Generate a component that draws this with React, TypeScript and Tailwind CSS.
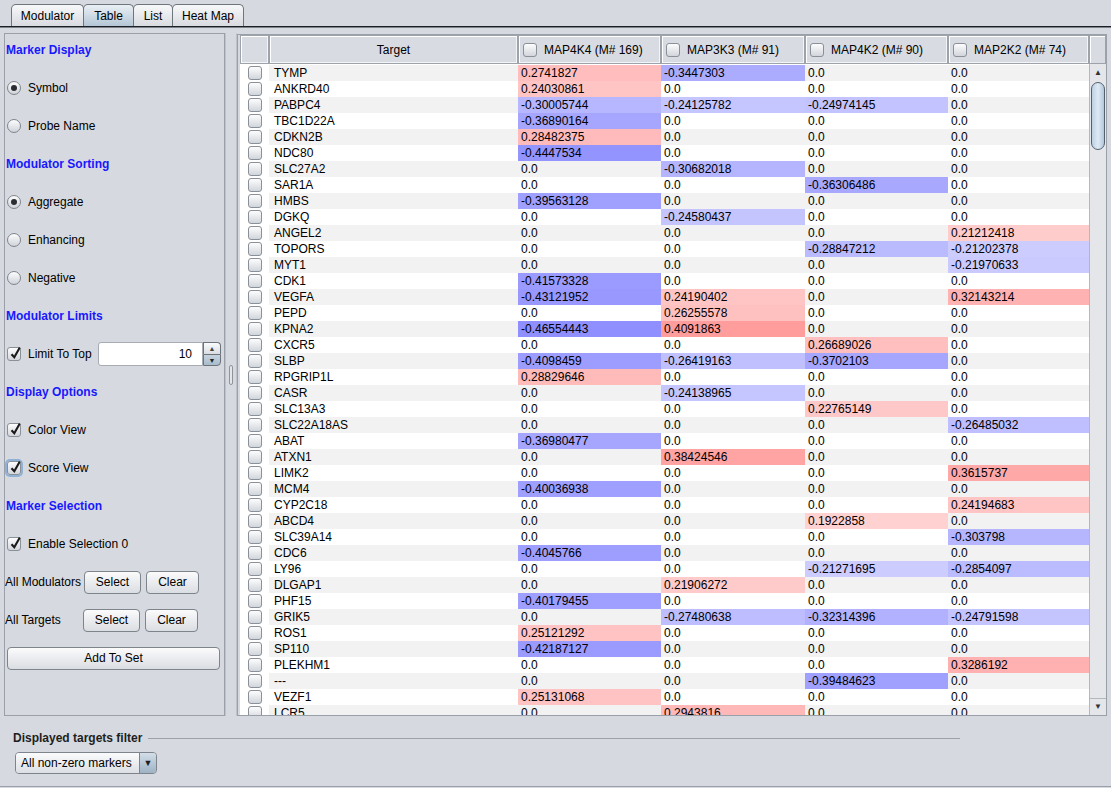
import React from "react";

type Row = [string, string, string, string, string];

const rows: Row[] = [
  ["TYMP", "0.2741827", "-0.3447303", "0.0", "0.0"],
  ["ANKRD40", "0.24030861", "0.0", "0.0", "0.0"],
  ["PABPC4", "-0.30005744", "-0.24125782", "-0.24974145", "0.0"],
  ["TBC1D22A", "-0.36890164", "0.0", "0.0", "0.0"],
  ["CDKN2B", "0.28482375", "0.0", "0.0", "0.0"],
  ["NDC80", "-0.4447534", "0.0", "0.0", "0.0"],
  ["SLC27A2", "0.0", "-0.30682018", "0.0", "0.0"],
  ["SAR1A", "0.0", "0.0", "-0.36306486", "0.0"],
  ["HMBS", "-0.39563128", "0.0", "0.0", "0.0"],
  ["DGKQ", "0.0", "-0.24580437", "0.0", "0.0"],
  ["ANGEL2", "0.0", "0.0", "0.0", "0.21212418"],
  ["TOPORS", "0.0", "0.0", "-0.28847212", "-0.21202378"],
  ["MYT1", "0.0", "0.0", "0.0", "-0.21970633"],
  ["CDK1", "-0.41573328", "0.0", "0.0", "0.0"],
  ["VEGFA", "-0.43121952", "0.24190402", "0.0", "0.32143214"],
  ["PEPD", "0.0", "0.26255578", "0.0", "0.0"],
  ["KPNA2", "-0.46554443", "0.4091863", "0.0", "0.0"],
  ["CXCR5", "0.0", "0.0", "0.26689026", "0.0"],
  ["SLBP", "-0.4098459", "-0.26419163", "-0.3702103", "0.0"],
  ["RPGRIP1L", "0.28829646", "0.0", "0.0", "0.0"],
  ["CASR", "0.0", "-0.24138965", "0.0", "0.0"],
  ["SLC13A3", "0.0", "0.0", "0.22765149", "0.0"],
  ["SLC22A18AS", "0.0", "0.0", "0.0", "-0.26485032"],
  ["ABAT", "-0.36980477", "0.0", "0.0", "0.0"],
  ["ATXN1", "0.0", "0.38424546", "0.0", "0.0"],
  ["LIMK2", "0.0", "0.0", "0.0", "0.3615737"],
  ["MCM4", "-0.40036938", "0.0", "0.0", "0.0"],
  ["CYP2C18", "0.0", "0.0", "0.0", "0.24194683"],
  ["ABCD4", "0.0", "0.0", "0.1922858", "0.0"],
  ["SLC39A14", "0.0", "0.0", "0.0", "-0.303798"],
  ["CDC6", "-0.4045766", "0.0", "0.0", "0.0"],
  ["LY96", "0.0", "0.0", "-0.21271695", "-0.2854097"],
  ["DLGAP1", "0.0", "0.21906272", "0.0", "0.0"],
  ["PHF15", "-0.40179455", "0.0", "0.0", "0.0"],
  ["GRIK5", "0.0", "-0.27480638", "-0.32314396", "-0.24791598"],
  ["ROS1", "0.25121292", "0.0", "0.0", "0.0"],
  ["SP110", "-0.42187127", "0.0", "0.0", "0.0"],
  ["PLEKHM1", "0.0", "0.0", "0.0", "0.3286192"],
  ["---", "0.0", "0.0", "-0.39484623", "0.0"],
  ["VEZF1", "0.25131068", "0.0", "0.0", "0.0"],
  ["LCR5", "0.0", "0.2943816", "0.0", "0.0"],
];

const valueWidths = ["w-[143px]", "w-[144px]", "w-[143px]", "w-[141px]"];

function cellBg(s: string): string | undefined {
  const v = parseFloat(s);
  if (!v) return undefined;
  const d = Math.round(255 - 240 * Math.abs(v));
  return v > 0 ? `rgb(255,${d},${d})` : `rgb(${d},${d},255)`;
}

function Box({ checked = false, focus = false }: { checked?: boolean; focus?: boolean }) {
  return (
    <span
      className={`relative inline-block w-[14px] h-[14px] shrink-0 rounded-[3px] border border-[#8a9098] bg-linear-to-b from-[#fdfdfe] to-[#d2d5db] ${
        focus ? "ring-2 ring-[#8fb1d6]" : ""
      }`}
    >
      {checked && (
        <svg className="absolute left-[1px] top-[-2px]" width="13" height="14" viewBox="0 0 13 14">
          <path d="M2.5 8.2 L5.3 11.3 L10.8 1.5" fill="none" stroke="#1a1a1a" strokeWidth="2.1" />
        </svg>
      )}
    </span>
  );
}

function Radio({ checked = false }: { checked?: boolean }) {
  return (
    <span className="inline-flex items-center justify-center w-[14px] h-[14px] shrink-0 rounded-full border border-[#7f858d] bg-linear-to-b from-[#fdfdfe] to-[#cfd3d9]">
      {checked && <span className="w-[6px] h-[6px] rounded-full bg-[#2a2d31]" />}
    </span>
  );
}

function Btn({ label, w }: { label: string; w: string }) {
  return (
    <div
      className={`${w} h-[23px] shrink-0 flex items-center justify-center rounded-[4px] border border-[#7e848c] bg-linear-to-b from-[#fbfbfc] to-[#dadde2] text-black`}
    >
      {label}
    </div>
  );
}

function Heading({ children }: { children: React.ReactNode }) {
  return <div className="h-[24px] flex items-center pl-[1px] font-bold text-[#1818ff]">{children}</div>;
}

function Item({ children }: { children: React.ReactNode }) {
  return <div className="h-[24px] flex items-center pl-[2px] gap-[7px]">{children}</div>;
}

function Tab({ label, w, selected = false }: { label: string; w: string; selected?: boolean }) {
  return (
    <div
      className={`${w} h-[22px] -mr-[1px] flex items-center justify-center rounded-t-[5px] border border-b-0 border-[#6f757d] ${
        selected
          ? "bg-linear-to-b from-[#eaf0f5] to-[#b4c6d5]"
          : "bg-linear-to-b from-[#f7f8f9] to-[#d8dbe0]"
      }`}
    >
      {label}
    </div>
  );
}

function HeaderCell({ w, children, center = false }: { w: string; children?: React.ReactNode; center?: boolean }) {
  return (
    <div
      className={`${w} h-full shrink-0 flex items-center border border-[#9ea3ab] bg-[#d8dbe1] shadow-[inset_1px_1px_0_#ffffff,inset_-1px_-1px_0_#f4f5f7] ${
        center ? "justify-center" : "pl-[4px] gap-[7px]"
      }`}
    >
      {children}
    </div>
  );
}

export default function App() {
  return (
    <div className="w-[1111px] h-[788px] overflow-hidden bg-[#d6d9df] flex flex-col text-[12px] text-black font-['Liberation_Sans',Arial,sans-serif] leading-none">
      {/* Tabs */}
      <div className="pt-[4px] pl-[11px] flex">
        <Tab label="Modulator" w="w-[73px]" />
        <Tab label="Table" w="w-[51px]" selected />
        <Tab label="List" w="w-[40px]" />
        <Tab label="Heat Map" w="w-[72px]" />
      </div>
      <div className="h-[1px] bg-[#1c2026]" />
      <div className="h-[1px] bg-[#7d838b]" />

      {/* Main */}
      <div className="mt-[5px] h-[683px] flex">
        {/* Left panel */}
        <div className="ml-[4px] w-[221px] h-full border border-[#9ba0a8] flex flex-col pt-[4px] gap-[14px]">
          <Heading>Marker Display</Heading>
          <Item>
            <Radio checked />
            <span>Symbol</span>
          </Item>
          <Item>
            <Radio />
            <span>Probe Name</span>
          </Item>
          <Heading>Modulator Sorting</Heading>
          <Item>
            <Radio checked />
            <span>Aggregate</span>
          </Item>
          <Item>
            <Radio />
            <span>Enhancing</span>
          </Item>
          <Item>
            <Radio />
            <span>Negative</span>
          </Item>
          <Heading>Modulator Limits</Heading>
          <div className="h-[24px] flex items-center pl-[2px]">
            <Box checked />
            <span className="ml-[7px] w-[70px]">Limit To Top</span>
            <div className="w-[105px] h-[24px] bg-white border border-[#a7acb4] rounded-l-[3px] flex items-center justify-end pr-[10px]">
              10
            </div>
            <div className="w-[18px] h-[24px] flex flex-col">
              <div className="h-[12px] flex items-center justify-center border border-b-0 border-[#6d737b] rounded-tr-[4px] bg-linear-to-b from-[#fafbfc] to-[#d9dde2] text-[7px] text-[#444]">
                ▲
              </div>
              <div className="h-[12px] flex items-center justify-center border border-[#6d737b] rounded-br-[4px] bg-linear-to-b from-[#c7d4df] to-[#a8bccc] text-[7px] text-[#222]">
                ▼
              </div>
            </div>
          </div>
          <Heading>Display Options</Heading>
          <Item>
            <Box checked />
            <span>Color View</span>
          </Item>
          <Item>
            <Box checked focus />
            <span>Score View</span>
          </Item>
          <Heading>Marker Selection</Heading>
          <Item>
            <Box checked />
            <span>Enable Selection 0</span>
          </Item>
          <div className="h-[24px] flex items-center">
            <span className="w-[79px]">All Modulators</span>
            <Btn label="Select" w="w-[57px]" />
            <span className="w-[5px]" />
            <Btn label="Clear" w="w-[53px]" />
          </div>
          <div className="h-[24px] flex items-center">
            <span className="w-[78px]">All Targets</span>
            <Btn label="Select" w="w-[57px]" />
            <span className="w-[5px]" />
            <Btn label="Clear" w="w-[53px]" />
          </div>
          <div className="h-[24px] flex items-center pl-[2px]">
            <Btn label="Add To Set" w="w-[213px]" />
          </div>
        </div>

        {/* Splitter */}
        <div className="w-[12px] h-full flex items-center justify-center border-l border-r border-[#bfc3c9]">
          <div className="w-[4px] h-[20px] rounded-full border border-[#8e949c] bg-[#e4e6ea]" />
        </div>

        {/* Table scroll pane */}
        <div className="mt-[1px] w-[870px] h-[682px] border border-[#9aa0a8] bg-white flex overflow-hidden">
          <div className="w-[851px] pl-[2px] flex flex-col bg-[#d6d9df]">
            <div className="h-[29px] flex shrink-0">
              <HeaderCell w="w-[29px]" />
              <HeaderCell w="w-[249px]" center>
                Target
              </HeaderCell>
              <HeaderCell w="w-[143px]">
                <Box />
                <span>MAP4K4 (M# 169)</span>
              </HeaderCell>
              <HeaderCell w="w-[144px]">
                <Box />
                <span>MAP3K3 (M# 91)</span>
              </HeaderCell>
              <HeaderCell w="w-[143px]">
                <Box />
                <span>MAP4K2 (M# 90)</span>
              </HeaderCell>
              <HeaderCell w="w-[141px]">
                <Box />
                <span>MAP2K2 (M# 74)</span>
              </HeaderCell>
            </div>
            <div className="flex-1 overflow-hidden bg-white pt-[1px]">
              {rows.map((r, i) => {
                const stripe = i % 2 === 0 ? "bg-[#f2f2f2]" : "bg-white";
                return (
                  <div key={i} className="h-[16px] flex leading-[15px]">
                    <div className="w-[29px] shrink-0 bg-white flex items-center justify-center">
                      <Box />
                    </div>
                    <div className={`w-[249px] shrink-0 pl-[5px] pt-[1px] ${stripe}`}>{r[0]}</div>
                    {r.slice(1).map((v, j) => (
                      <div
                        key={j}
                        className={`${valueWidths[j]} shrink-0 pl-[3px] pt-[1px] ${stripe}`}
                        style={cellBg(v) ? { backgroundColor: cellBg(v) } : undefined}
                      >
                        {v}
                      </div>
                    ))}
                  </div>
                );
              })}
            </div>
          </div>

          {/* Scrollbar */}
          <div className="w-[17px] flex flex-col">
            <div className="h-[29px] shrink-0 border border-[#9ea3ab] bg-[#d8dbe1] shadow-[inset_1px_1px_0_#ffffff]" />
            <div className="flex-1 flex flex-col bg-[#e4e6e9] border-l border-[#b3b8bf]">
              <div className="h-[17px] pt-[1px] flex items-center justify-center text-[8px] text-[#2f3338]">▲</div>
              <div className="mx-[1px] mt-[1px] h-[68px] rounded-[7px] border border-[#53606d] bg-linear-to-r from-[#bcd1e3] via-[#dfeaf4] to-[#b2c8dc]" />
              <div className="flex-1" />
              <div className="h-[16px] mb-[1px] flex items-center justify-center text-[8px] text-[#2f3338] border-t border-[#b3b8bf]">▼</div>
            </div>
          </div>
        </div>
      </div>

      {/* Bottom filter */}
      <div className="mt-[14px] pl-[13px] w-[960px] h-[16px] flex items-center gap-[6px]">
        <span className="font-bold text-[#1e1e1e]">Displayed targets filter</span>
        <div className="flex-1 h-[1px] bg-[#9da2aa]" />
      </div>
      <div className="mt-[6px] ml-[15px] w-[142px] h-[22px] flex rounded-[4px] border border-[#7e848c] overflow-hidden">
        <div className="flex-1 flex items-center pl-[5px] bg-linear-to-b from-[#fbfbfc] to-[#dcdfe4]">All non-zero markers</div>
        <div className="w-[17px] flex items-center justify-center border-l border-[#7e848c] bg-linear-to-b from-[#d3dee8] to-[#9fb3c5] text-[9px] text-[#1d2127]">
          ▼
        </div>
      </div>
      <div className="mt-[12px] h-[1px] bg-[#9aa0a8]" />
    </div>
  );
}
